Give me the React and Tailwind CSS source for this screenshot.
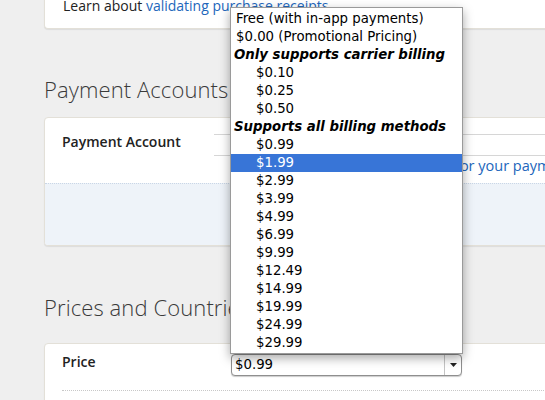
import React from "react";

const options = [
  { label: "Free (with in-app payments)" },
  { label: "$0.00 (Promotional Pricing)" },
  { label: "Only supports carrier billing", group: true },
  { label: "$0.10", indent: true },
  { label: "$0.25", indent: true },
  { label: "$0.50", indent: true },
  { label: "Supports all billing methods", group: true },
  { label: "$0.99", indent: true },
  { label: "$1.99", indent: true, selected: true },
  { label: "$2.99", indent: true },
  { label: "$3.99", indent: true },
  { label: "$4.99", indent: true },
  { label: "$6.99", indent: true },
  { label: "$9.99", indent: true },
  { label: "$12.49", indent: true },
  { label: "$14.99", indent: true },
  { label: "$19.99", indent: true },
  { label: "$24.99", indent: true },
  { label: "$29.99", indent: true },
];

const Card = ({ children, className = "" }) => (
  <div
    className={`rounded-[4px] border border-[#e3e0d8] bg-white shadow-[0_1px_1px_rgba(0,0,0,0.08)] ${className}`}
  >
    {children}
  </div>
);

const Heading = ({ children }) => (
  <h2 className="h-[22px] text-[22px] font-light tracking-[0.1px] text-[#3a3a3a] leading-[22px]">
    {children}
  </h2>
);

const DropdownList = () => (
  <div className="absolute left-[230px] top-[7px] w-[233px] border border-[#9a9a9a] bg-white pt-[2px] pb-[1px] shadow-[0_4px_10px_rgba(0,0,0,0.35)] font-['DejaVu_Sans',sans-serif] text-[13.3px] text-black">
    {options.map((o, i) => (
      <div
        key={i}
        className={`h-[18px] leading-[18px] whitespace-nowrap ${
          o.group ? "pl-[3px] font-bold italic" : o.indent ? "pl-[25px]" : "pl-[5px]"
        } ${o.selected ? "bg-[#3875d7] text-white" : ""}`}
      >
        {o.label}
      </div>
    ))}
  </div>
);

export default function App() {
  return (
    <div className="relative h-[400px] w-[545px] overflow-hidden bg-[#efefef] font-['Open_Sans',sans-serif]">
      <div className="-mt-[14px] w-[640px] pl-[44px]">
        {/* top card, cut off at the top */}
        <Card className="px-[18px] pt-[10px] pb-[12px] border-t-0 rounded-t-none">
          <p className="text-[14px] leading-[20px] text-[#222]">
            Learn about{" "}
            <a className="text-[#2266bb]">validating purchase receipts</a>.
          </p>
        </Card>

        <div className="mt-[49px]">
          <Heading>Payment Accounts</Heading>
        </div>

        <Card className="mt-[17px] overflow-hidden">
          <div className="flex h-[65px] pt-[14px]">
            <div className="w-[169px] shrink-0 pl-[17px] text-[14px] leading-[20px] font-semibold text-[#222]">
              Payment Account
            </div>
            <div className="flex-1">
              <div className="mt-[2px] h-[22px] border-y border-[#d6d6d6] bg-white" />
              <p className="pl-[241px] text-[14.5px] leading-[20px] text-[#2266bb] whitespace-nowrap">
                for your payments.
              </p>
            </div>
          </div>
          <div className="h-[62px] border-t border-dotted border-[#c9d6e6] bg-[#eef3f9]" />
        </Card>

        <div className="mt-[50px]">
          <Heading>Prices and Countries</Heading>
        </div>

        <Card className="mt-[25px]">
          <div className="flex items-start pt-[5px] pb-[14px]">
            <div className="w-[186px] shrink-0 pl-[17px] pt-[3px] text-[14px] leading-[20px] font-semibold text-[#222]">
              Price
            </div>
            <div className="mt-[5px] flex h-[22px] w-[231px] items-center justify-between rounded-[4px] border border-[#8f8f8f] bg-white font-['DejaVu_Sans',sans-serif] text-[13.3px] text-black shadow-[0_1px_1px_rgba(0,0,0,0.2)]">
              <span className="pl-[3px]">$0.99</span>
              <span className="flex h-full w-[17px] items-center justify-center border-l border-[#c4c4c4]">
                <svg width="7" height="4" viewBox="0 0 7 4">
                  <path d="M0 0h7L3.5 4z" fill="#222" />
                </svg>
              </span>
            </div>
          </div>
          <div className="mx-[17px] border-t border-dotted border-[#c8c8c8]" />
          <div className="h-[30px]" />
        </Card>
      </div>

      <DropdownList />
    </div>
  );
}
